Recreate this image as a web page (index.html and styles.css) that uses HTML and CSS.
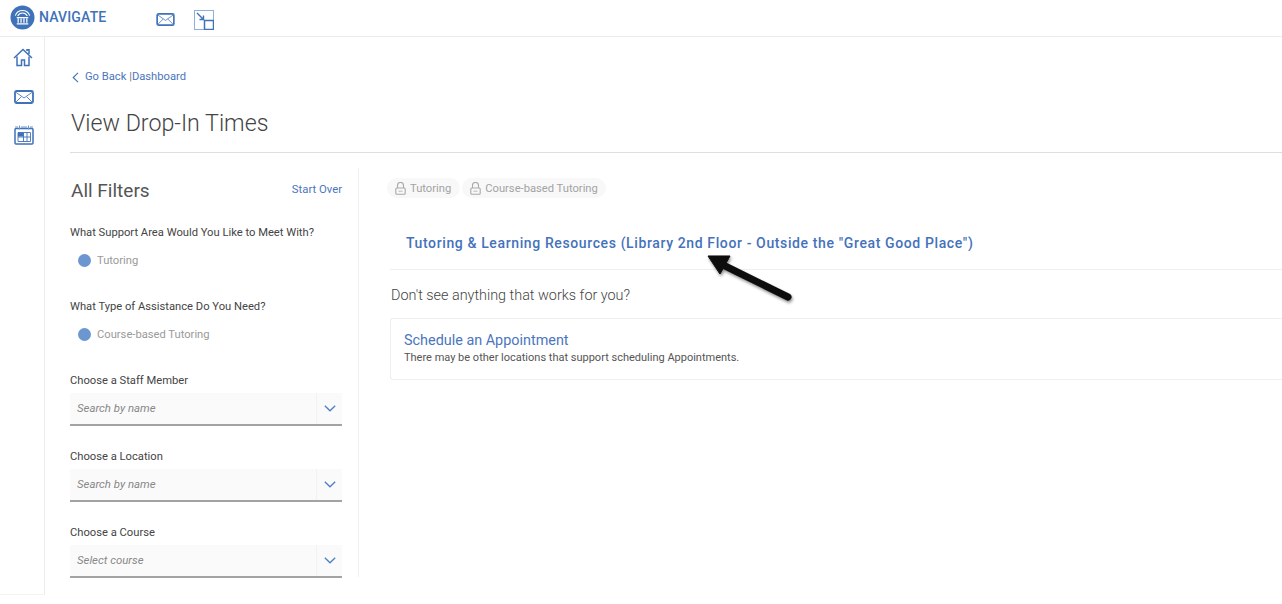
FILE: index.html
```html
<!DOCTYPE html>
<html lang="en">
<head>
<meta charset="utf-8">
<title>View Drop-In Times</title>
<link rel="stylesheet" href="styles.css">
</head>
<body>
<header class="topbar">
  <div class="brand">
    <svg class="brand-logo" viewBox="0 0 26 26" aria-hidden="true">
      <circle cx="13" cy="13" r="12.5" fill="#3f72b8"/>
      <path d="M5.5 11 A8 8 0 0 1 20.5 11" fill="none" stroke="#fff" stroke-width="1.1"/>
      <path d="M8 11.5 A5.5 5.5 0 0 1 18 11.5" fill="none" stroke="#fff" stroke-width="1.1"/>
      <path d="M7 13h12M8.5 14v4.5M11.5 14v4.5M14.5 14v4.5M17.5 14v4.5M7 19.5h12" fill="none" stroke="#fff" stroke-width="1.3"/>
    </svg>
    <span class="brand-name">NAVIGATE</span>
  </div>
  <svg class="top-mail" viewBox="0 0 20 14" aria-hidden="true">
    <rect x="1" y="1" width="18" height="12" rx="1.5" fill="none" stroke="#3f72b8" stroke-width="1.8"/>
    <path d="M1.5 2 10 8l8.500-6M1.500 12.500 7.500 6.500M18.500 12.500 12.500 6.500" fill="none" stroke="#5f8bc8" stroke-width="1"/>
  </svg>
  <svg class="top-resize" viewBox="0 0 20 20" aria-hidden="true">
    <rect x=".5" y=".5" width="19" height="19" fill="none" stroke="#8fb0dc" stroke-width="1"/>
    <rect x="10.500" y="10.500" width="9" height="9" fill="#fff" stroke="#3f72b8" stroke-width="1.500"/>
    <path d="M3 3l6 6M9.500 5.500v4h-4" fill="none" stroke="#3f72b8" stroke-width="1.400"/>
  </svg>
</header>
<div class="shell">
  <nav class="sidenav">
    <svg class="nav-home" viewBox="0 0 20 19" aria-hidden="true">
      <path d="M1 10 10 1.500 19 10M14 3V1.800h2V6" fill="none" stroke="#3f72b8" stroke-width="1.500"/>
      <path d="M4 8.500V17.500h4.500V12h3v5.500H16V8.500" fill="none" stroke="#3f72b8" stroke-width="1.500"/>
    </svg>
    <svg class="nav-mail" viewBox="0 0 20 14" aria-hidden="true">
      <rect x="1" y="1" width="18" height="12" rx="1.500" fill="none" stroke="#3f72b8" stroke-width="1.800"/>
      <path d="M1.500 2 10 8l8.500-6M1.500 12.500 7.500 6.500M18.500 12.500 12.500 6.500" fill="none" stroke="#5f8bc8" stroke-width="1"/>
    </svg>
    <svg class="nav-cal" viewBox="0 0 20 20" aria-hidden="true">
      <rect x="1" y="3.500" width="18" height="15.500" rx="1" fill="none" stroke="#3f72b8" stroke-width="1.500"/>
      <path d="M1 2h3M7 2h6M16 2h3M5.500 .5v4M14.500 .5v4" fill="none" stroke="#6f97cf" stroke-width="1"/>
      <rect x="4" y="7.500" width="5.500" height="4" fill="#3f72b8"/>
      <path d="M4 7.500h12.500v9H4zM4 12h12.500M9.500 7.500v9M13 7.500v9" fill="none" stroke="#3f72b8" stroke-width=".9"/>
    </svg>
  </nav>
  <main class="content">
    <div class="crumbs">
      <svg class="crumb-chevron" viewBox="0 0 7 11" aria-hidden="true"><path d="M6 .8 1.200 5.500 6 10.200" fill="none" stroke="#3f72b8" stroke-width="1.100"/></svg>
      <a class="crumb-link">Go Back</a><span class="crumb-sep"> |</span><a class="crumb-link">Dashboard</a>
    </div>
    <h1 class="page-title">View Drop-In Times</h1>
    <div class="columns">
      <aside class="filters">
        <div class="filters-head">
          <h2 class="filters-title">All Filters</h2>
          <a class="start-over">Start Over</a>
        </div>
        <div class="filter-label first">What Support Area Would You Like to Meet With?</div>
        <div class="radio-row"><span class="radio-dot"></span><span>Tutoring</span></div>
        <div class="filter-label second">What Type of Assistance Do You Need?</div>
        <div class="radio-row"><span class="radio-dot"></span><span>Course-based Tutoring</span></div>
        <div class="filter-label select-label top">Choose a Staff Member</div>
        <div class="select"><span class="select-text">Search by name</span><span class="select-btn"><svg class="chev" viewBox="0 0 12 7" aria-hidden="true"><path d="M.8.8 6 5.800 11.200.8" fill="none" stroke="#4f7fc2" stroke-width="1.300"/></svg></span></div>
        <div class="filter-label select-label">Choose a Location</div>
        <div class="select"><span class="select-text">Search by name</span><span class="select-btn"><svg class="chev" viewBox="0 0 12 7" aria-hidden="true"><path d="M.8.8 6 5.800 11.200.8" fill="none" stroke="#4f7fc2" stroke-width="1.300"/></svg></span></div>
        <div class="filter-label select-label">Choose a Course</div>
        <div class="select"><span class="select-text">Select course</span><span class="select-btn"><svg class="chev" viewBox="0 0 12 7" aria-hidden="true"><path d="M.8.8 6 5.800 11.200.8" fill="none" stroke="#4f7fc2" stroke-width="1.300"/></svg></span></div>
      </aside>
      <section class="results">
        <div class="chips">
          <span class="chip"><svg class="lock" viewBox="0 0 11 13" aria-hidden="true"><path d="M2.500 6V3.500a3 3 0 0 1 6 0V6" fill="none" stroke="#a9a9a9" stroke-width="1.100"/><rect x=".8" y="6" width="9.400" height="6.200" rx="1" fill="none" stroke="#a9a9a9" stroke-width="1.100"/><path d="M3.500 9.200h4" stroke="#a9a9a9" stroke-width=".8"/></svg>Tutoring</span>
          <span class="chip"><svg class="lock" viewBox="0 0 11 13" aria-hidden="true"><path d="M2.500 6V3.500a3 3 0 0 1 6 0V6" fill="none" stroke="#a9a9a9" stroke-width="1.100"/><rect x=".8" y="6" width="9.400" height="6.200" rx="1" fill="none" stroke="#a9a9a9" stroke-width="1.100"/><path d="M3.500 9.200h4" stroke="#a9a9a9" stroke-width=".8"/></svg>Course-based Tutoring</span>
        </div>
        <div class="result-row"><a class="result-link">Tutoring &amp; Learning Resources (Library 2nd Floor - Outside the "Great Good Place")</a></div>
        <p class="nothing">Don't see anything that works for you?</p>
        <div class="appt-card">
          <a class="appt-title">Schedule an Appointment</a>
          <div class="appt-desc">There may be other locations that support scheduling Appointments.</div>
        </div>
      </section>
    </div>
  </main>
</div>
<svg class="arrow" viewBox="0 0 100 62" aria-hidden="true">
  <defs><filter id="arrow-shadow" x="-20%" y="-20%" width="140%" height="150%"><feDropShadow dx="1" dy="2" stdDeviation="1.500" flood-color="#000" flood-opacity=".45"/></filter></defs>
  <g filter="url(#arrow-shadow)">
    <path d="M19 13 88 47" fill="none" stroke="#0b0b0b" stroke-width="7" stroke-linecap="round"/>
    <path d="M8 6 30 6 20 24z" fill="#0b0b0b" stroke="#0b0b0b" stroke-width="1" stroke-linejoin="round"/>
  </g>
</svg>
</body>
</html>
```
FILE: styles.css
```css
* { box-sizing: border-box; }
html, body { margin: 0; padding: 0; }
body {
  position: relative;
  width: 1282px;
  height: 604px;
  overflow: hidden;
  background: #fff;
  font-family: Roboto, "Liberation Sans", sans-serif;
  color: #444;
}
.topbar {
  display: flex;
  align-items: center;
  height: 37px;
  border-bottom: 1px solid #ececec;
}
.brand { display: flex; align-items: center; margin-left: 10px; width: 146px; margin-top: -2px; }
.brand-logo { width: 25px; height: 25px; }
.brand-name { margin-left: 4px; font-size: 14px; font-weight: 500; color: #3f72b8; letter-spacing: .15px; margin-top: 0; }
.top-mail { width: 19px; height: 13px; margin-right: 19px; margin-top: 2px; }
.top-resize { width: 20px; height: 20px; margin-top: 4px; }
.shell { display: flex; height: 558px; border-bottom: 1px solid #f2f2f2; width: 45px; overflow: visible; }
.sidenav {
  flex: 0 0 45px;
  border-right: 1px solid #ececec;
  display: flex;
  flex-direction: column;
  align-items: center;
  padding: 11px 0 0 1px;
}
.nav-home { width: 20px; height: 19px; margin-left: 1px; }
.nav-mail { width: 20px; height: 14px; margin-top: 23px; margin-left: 3px; }
.nav-cal { width: 20px; height: 20px; margin-top: 21px; margin-left: 3px; }
.content { flex: 0 0 1237px; padding: 32px 0 0 25px; }
.crumbs { display: flex; align-items: center; height: 14px; font-size: 11.2px; color: #4b76bd; padding-left: 2px; }
.crumb-chevron { width: 7px; height: 11px; margin-right: 6px; margin-top: 3px; }
.crumb-link { color: #4b76bd; }
.crumb-sep { white-space: pre; color: #777; }
.page-title {
  margin: 24px 0 0;
  height: 46px;
  padding-left: 1px;
  border-bottom: 1px solid #dedede;
  font-size: 23.200px;
  line-height: 33px;
  font-weight: 300;
  color: #444;
}
.columns { display: flex; margin-top: 15px; }
.filters { flex: 0 0 289px; height: 409px; padding-right: 16px; border-right: 1px solid #f1f1f1; }
.filters-head { display: flex; justify-content: space-between; align-items: center; height: 16px; margin-top: 15px; }
.filters-title { margin: 0; font-size: 19px; line-height: 24px; font-weight: 400; color: #555; padding-left: 1px; }
.start-over { font-size: 11.300px; color: #4b76bd; margin-top: -3px; }
.filter-label { font-size: 11.200px; line-height: 14px; color: #444; }
.filter-label.first { margin-top: 27px; }
.filter-label.second { margin-top: 33px; }
.filter-label.select-label { margin-top: 24px; }
.filter-label.select-label.top { margin-top: 33px; }
.radio-row { display: flex; align-items: center; margin-top: 13px; height: 14px; padding-left: 8px; font-size: 11.200px; color: #9a9a9a; }
.radio-dot { width: 13px; height: 13px; border-radius: 50%; background: #6b96d0; margin-right: 6px; }
.select {
  display: flex;
  align-items: center;
  height: 33px;
  margin-top: 5px;
  background: #fafafa;
  border-bottom: 2px solid #a3a3a3;
}
.select-text { flex: 1; padding: 0 0 2px 7px; font-size: 11.400px; font-style: italic; color: #888; }
.select-btn { flex: 0 0 26px; height: 100%; display: flex; align-items: center; justify-content: center; border-left: 1px solid #f2f2f2; }
.chev { width: 12px; height: 7px; }
.results { flex: 1; padding-left: 28px; }
.chips { display: flex; gap: 2px; margin-left: -.5px; padding-top: 10px; }
.chip {
  display: inline-flex;
  align-items: center;
  height: 20px;
  padding: 0 8.500px;
  border-radius: 10px;
  background: #f8f8f8;
  font-size: 11.200px;
  color: #a3a3a3;
}
.lock { width: 11px; height: 13px; margin-right: 4px; }
.result-row { margin-left: 3px; height: 72px; padding: 35px 0 0 16px; border-bottom: 1px solid #efefef; width: 892px; margin-top: 0; }
.result-link { font-size: 14px; line-height: 20px; font-weight: 500; letter-spacing: .62px; color: #4472bb; white-space: nowrap; }
.nothing { margin: 17px 0 0 4px; font-size: 14.400px; line-height: 18px; color: #444; font-weight: 300; }
.appt-card {
  margin: 13px 0 0 3px;
  width: 892px;
  height: 62px;
  padding: 13px 13px 0;
  border: 1px solid #efefef;
  border-right: 0;
  border-radius: 3px 0 0 3px;
}
.appt-title { display: block; font-size: 14.400px; line-height: 17px; color: #4b76bd; }
.appt-desc { font-size: 11px; line-height: 14px; margin-top: 2px; color: #555; }
.arrow { position: absolute; left: 700px; top: 250px; width: 100px; height: 62px; }
```
